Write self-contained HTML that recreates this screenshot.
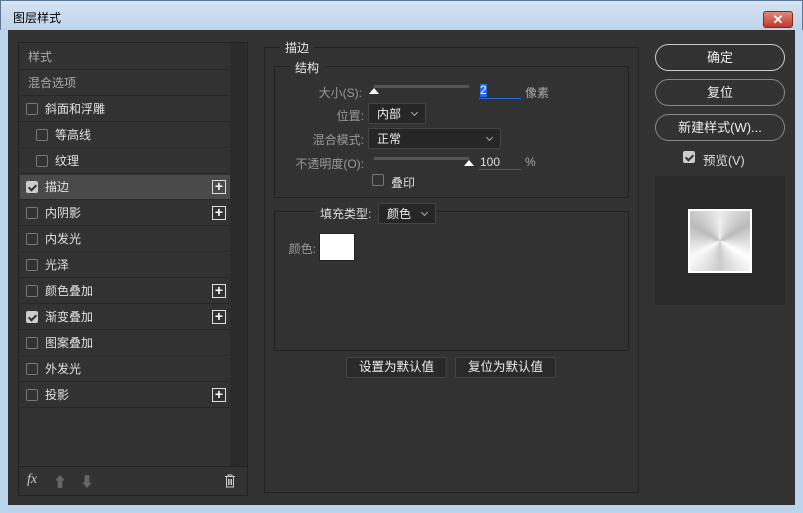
<!DOCTYPE html><html><head><meta charset="utf-8"><style>
*{box-sizing:border-box;margin:0;padding:0}
body{width:803px;height:513px;overflow:hidden;background:#bcd3ec;font-family:"Liberation Sans","Noto Sans CJK SC",sans-serif;font-size:12px;color:#ddd;position:relative}
.a{position:absolute}
#tb{left:0;top:0;width:803px;height:30px;background:linear-gradient(#d6e4f3,#bed3ea);border:1px solid #5d7797;border-bottom:none}
#main{left:8px;top:30px;width:787px;height:475px;background:#323232}
.row{position:absolute;left:20px;width:210px;height:25px;border-bottom:1px solid #282828;line-height:25px;color:#e0e0e0}
.cb{position:absolute;width:12px;height:12px;border:1px solid #777;border-radius:2px;top:6px}
.cb.on{background:#ccc;border-color:#ccc}
.cb.on:after{content:"";position:absolute;left:3px;top:1px;width:3px;height:6px;border:solid #333;border-width:0 2px 2px 0;transform:rotate(45deg)}
.plus{position:absolute;left:192px;top:5px;width:14px;height:14px;border:1px solid #ddd;color:#fff;font-size:14px;line-height:11px;text-align:center;font-weight:bold}
.box{position:absolute;border:1px solid #222}
.lg{position:absolute;background:#323232;padding:0 5px;color:#e8e8e8;font-size:12px}
.lbl{position:absolute;color:#999;text-align:right}
.sel{position:absolute;background:#262626;border:1px solid #444;border-radius:2px;color:#eee;padding-left:8px;line-height:20px}
.sel:after{content:"";position:absolute;right:8px;top:6px;width:4px;height:4px;border:solid #aaa;border-width:0 1px 1px 0;transform:rotate(45deg)}
.btn{position:absolute;border:1px solid #888;border-radius:14px;text-align:center;color:#eee;font-size:13px;line-height:25px}
.sb{position:absolute;background:#2a2a2a;border:1px solid #444;border-radius:2px;text-align:center;line-height:18px;color:#eee;font-size:12.5px}
</style></head><body>
<div class="a" id="tb"><span class="a" style="left:12px;top:8px;color:#000;font-size:12px">图层样式</span>
<div class="a" style="left:762px;top:10px;width:30px;height:17px;background:linear-gradient(#e08a7a,#c0392b);border:1px solid #7a2a20;border-radius:3px;color:#fff;text-align:center;font-weight:bold;line-height:15px;font-size:13px">✕</div></div>
<div class="a" id="main"></div>
<!-- left panel -->
<div class="a" style="left:18px;top:42px;width:230px;height:454px;border:1px solid #222"></div>
<div class="a" style="left:230px;top:43px;width:16px;height:423px;background:#2b2b2b"></div>
<div class="a" style="left:19px;top:466px;width:228px;height:1px;background:#222"></div>
<div class="row" style="top:45px;color:#aaa;padding-left:8px">样式</div>
<div class="row" style="top:71px;color:#aaa;padding-left:8px">混合选项</div>
<div class="row" style="top:97px"><i class="cb" style="left:6px"></i><span style="margin-left:25px">斜面和浮雕</span></div>
<div class="row" style="top:123px"><i class="cb" style="left:16px"></i><span style="margin-left:35px">等高线</span></div>
<div class="row" style="top:149px"><i class="cb" style="left:16px"></i><span style="margin-left:35px">纹理</span></div>
<div class="row" style="top:175px;background:#4a4a4a"><i class="cb on" style="left:6px"></i><span style="margin-left:25px">描边</span><b class="plus">+</b></div>
<div class="row" style="top:201px"><i class="cb" style="left:6px"></i><span style="margin-left:25px">内阴影</span><b class="plus">+</b></div>
<div class="row" style="top:227px"><i class="cb" style="left:6px"></i><span style="margin-left:25px">内发光</span></div>
<div class="row" style="top:253px"><i class="cb" style="left:6px"></i><span style="margin-left:25px">光泽</span></div>
<div class="row" style="top:279px"><i class="cb" style="left:6px"></i><span style="margin-left:25px">颜色叠加</span><b class="plus">+</b></div>
<div class="row" style="top:305px"><i class="cb on" style="left:6px"></i><span style="margin-left:25px">渐变叠加</span><b class="plus">+</b></div>
<div class="row" style="top:331px"><i class="cb" style="left:6px"></i><span style="margin-left:25px">图案叠加</span></div>
<div class="row" style="top:357px"><i class="cb" style="left:6px"></i><span style="margin-left:25px">外发光</span></div>
<div class="row" style="top:383px"><i class="cb" style="left:6px"></i><span style="margin-left:25px">投影</span><b class="plus">+</b></div>
<span class="a" style="left:27px;top:472px;font-style:italic;font-family:'Liberation Serif',serif;font-size:14px;color:#ccc">fx</span>
<span class="a" style="left:53px;top:472px;color:#666;font-size:14px">⬆</span>
<span class="a" style="left:80px;top:472px;color:#666;font-size:14px">⬇</span>
<svg class="a" style="left:224px;top:474px" width="12" height="14"><path d="M1 2.5H11M4 2.5V1H8V2.5M2.5 3V13H9.5V3M4.5 5V11M6 5V11M7.5 5V11" stroke="#ccc" fill="none"/></svg>
<!-- middle -->
<div class="box" style="left:264px;top:47px;width:375px;height:446px"></div>
<span class="lg" style="left:280px;top:39px">描边</span>
<div class="box" style="left:274px;top:66px;width:355px;height:132px"></div>
<span class="lg" style="left:290px;top:59px">结构</span>
<span class="lbl" style="left:290px;top:84px;width:72px">大小(S):</span>
<div class="a" style="left:374px;top:85px;width:95px;height:3px;background:#555"></div>
<div class="a" style="left:369px;top:88px;width:0;height:0;border:5px solid transparent;border-bottom:6px solid #fff;border-top:0"></div>
<span class="a" style="left:480px;top:84px;background:#2a6ad8;color:#fff;line-height:13px">2</span>
<div class="a" style="left:479px;top:98px;width:42px;height:1px;background:#2a6ad8"></div>
<span class="a" style="left:525px;top:84px;color:#aaa">像素</span>
<span class="lbl" style="left:290px;top:107px;width:74px">位置:</span>
<div class="sel" style="left:368px;top:103px;width:58px;height:21px">内部</div>
<span class="lbl" style="left:290px;top:131px;width:74px">混合模式:</span>
<div class="sel" style="left:368px;top:128px;width:133px;height:21px">正常</div>
<span class="lbl" style="left:290px;top:155px;width:74px">不透明度(O):</span>
<div class="a" style="left:374px;top:157px;width:95px;height:3px;background:#555"></div>
<div class="a" style="left:464px;top:160px;width:0;height:0;border:5px solid transparent;border-bottom:6px solid #fff;border-top:0"></div>
<span class="a" style="left:480px;top:155px;color:#ddd">100</span>
<div class="a" style="left:479px;top:169px;width:42px;height:1px;background:#555"></div>
<span class="a" style="left:525px;top:155px;color:#aaa">%</span>
<i class="cb a" style="left:372px;top:174px"></i>
<span class="a" style="left:391px;top:174px">叠印</span>
<div class="box" style="left:274px;top:211px;width:355px;height:140px"></div>
<span class="lg" style="left:315px;top:205px;color:#ddd">填充类型:</span>
<div class="sel" style="left:378px;top:203px;width:58px;height:21px">颜色</div>
<span class="lbl" style="left:284px;top:240px;width:32px">颜色:</span>
<div class="a" style="left:319px;top:233px;width:36px;height:28px;background:#fff;border:1px solid #222"></div>
<div class="sb" style="left:346px;top:357px;width:101px;height:21px">设置为默认值</div>
<div class="sb" style="left:455px;top:357px;width:101px;height:21px">复位为默认值</div>
<!-- right -->
<div class="btn" style="left:655px;top:44px;width:130px;height:27px;border-color:#ccc">确定</div>
<div class="btn" style="left:655px;top:79px;width:130px;height:27px">复位</div>
<div class="btn" style="left:655px;top:114px;width:130px;height:27px">新建样式(W)...</div>
<i class="cb on a" style="left:683px;top:151px"></i>
<span class="a" style="left:703px;top:150px;font-size:12.5px">预览(V)</span>
<div class="a" style="left:655px;top:176px;width:130px;height:129px;background:#2a2a2a"></div>
<div class="a" style="left:688px;top:209px;width:64px;height:64px;border:2px solid #fff;background:conic-gradient(#eee,#bbb,#fff,#ccc,#fafafa,#bbb,#eee)"></div>
</body></html>
